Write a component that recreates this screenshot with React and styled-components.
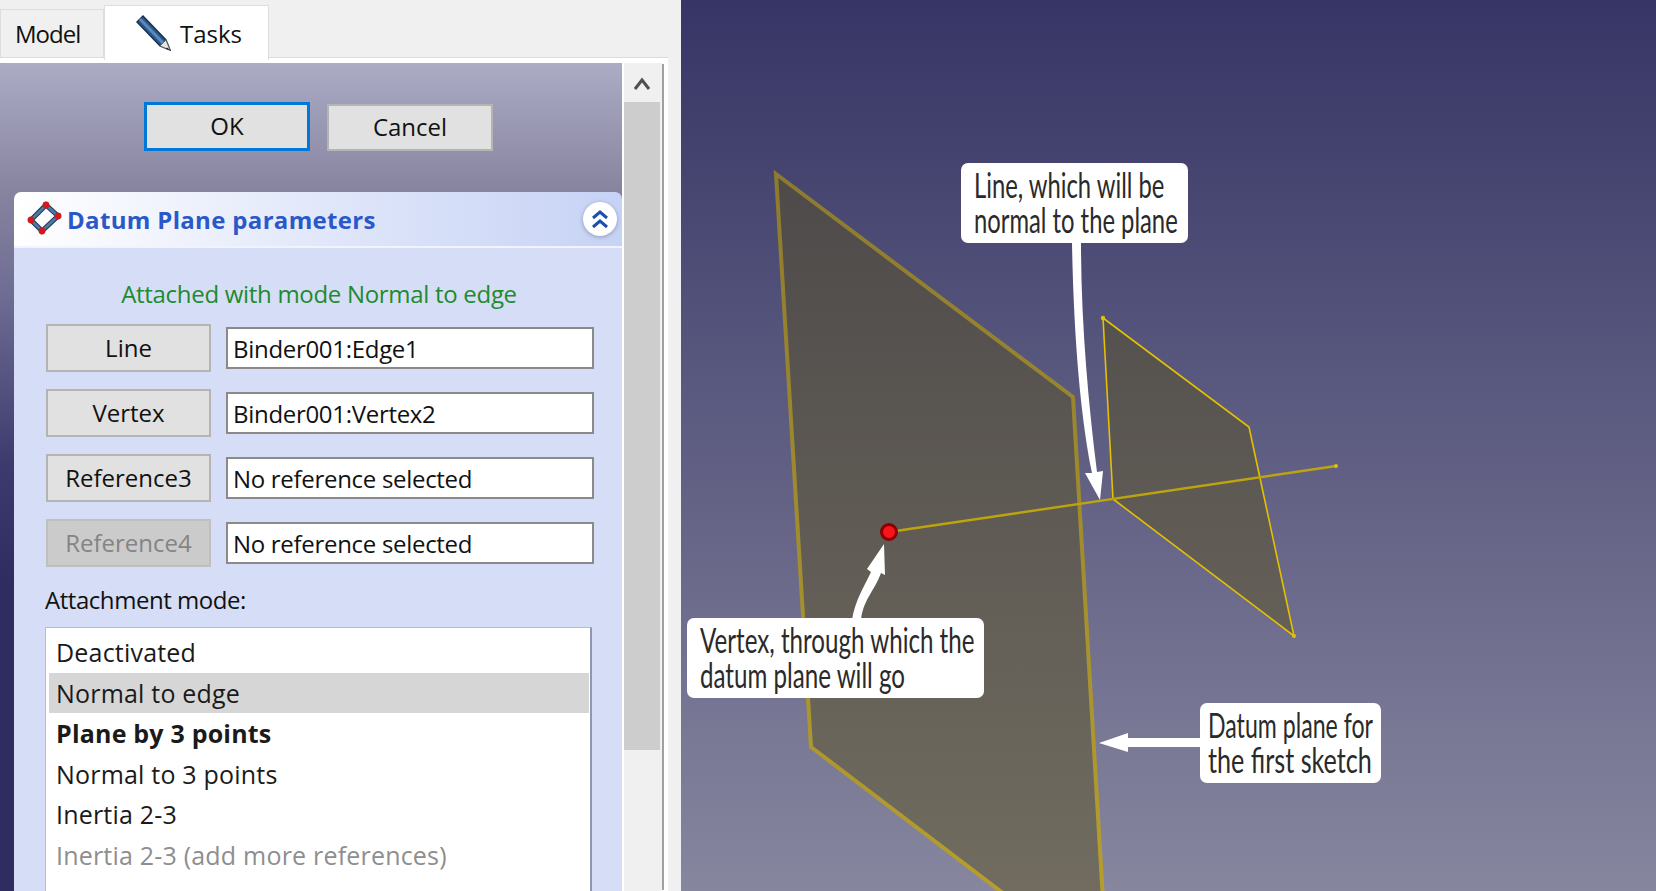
import React from 'react';
import styled, { createGlobalStyle } from 'styled-components';

const GlobalStyle = createGlobalStyle`
  html, body {
    margin: 0;
    height: 100%;
    overflow: hidden;
  }
`;

const Page = styled.div`
  display: flex;
  height: 891px;
  font-family: "Open Sans", "Liberation Sans", sans-serif;
  font-size: 24px;
  color: #111;
`;

const Sidebar = styled.div`
  width: 681px;
  flex: none;
  display: flex;
  flex-direction: column;
  background: #f0f0f0;
  overflow: hidden;
`;

const TabBar = styled.div`
  height: 57px;
  flex: none;
  display: flex;
  align-items: flex-end;
`;

const Tab = styled.div`
  display: flex;
  align-items: center;
  gap: 9px;
  box-sizing: border-box;
  width: ${p => (p.$active ? '165px' : '104px')};
  height: ${p => (p.$active ? '55px' : '48px')};
  padding-left: ${p => (p.$active ? '30px' : '14px')};
  letter-spacing: ${p => (p.$active ? '0' : '-1px')};
  background: ${p => (p.$active ? '#fff' : '#f0f0f0')};
  border: 1px solid #dedede;
  border-bottom: none;
  margin-bottom: ${p => (p.$active ? '-3px' : '0')};
  position: relative;
`;

const Frame = styled.div`
  flex: 1;
  min-height: 0;
  width: 668px;
  box-sizing: border-box;
  display: flex;
  background: #fff;
  border-top: 1px solid #dcdcdc;
  padding-top: 5px;
`;

const Panel = styled.div`
  width: 622px;
  flex: none;
  background: linear-gradient(180deg, #acacc5 0, #8784a0 127px, #6d6b92 237px, #3d3b6d 400px, #2f2d5f 520px, #2f2d5f 100%);
`;

const DialogButtons = styled.div`
  display: flex;
  gap: 17px;
  align-items: flex-end;
  padding: 39px 0 0 144px;
`;

const PushButton = styled.div`
  box-sizing: border-box;
  display: flex;
  align-items: center;
  justify-content: center;
  width: ${p => (p.$wide ? '166px' : '165px')};
  height: ${p => (p.$default ? '49px' : p.$wide ? '47px' : '48px')};
  padding-bottom: 2px;
  background: ${p => (p.$disabled ? '#cbcbcb' : '#e1e1e1')};
  color: ${p => (p.$disabled ? '#848484' : '#111')};
  border: ${p => (p.$default ? '3px solid #0078d7' : `2px solid ${p.$disabled ? '#bfbfbf' : '#b4b4b4'}`)};
`;

const Card = styled.div`
  margin: 41px 0 0 14px;
`;

const CardHeader = styled.div`
  height: 54px;
  display: flex;
  align-items: center;
  justify-content: space-between;
  padding: 0 5px 0 13px;
  background: linear-gradient(90deg, #fff 0, #d9e1f9 65%, #c7d3f5 100%);
  border-radius: 7px 7px 0 0;
  border-bottom: 2px solid #f2f4fd;
`;

const CardTitle = styled.div`
  display: flex;
  align-items: center;
  gap: 4px;
  color: #2a58c8;
  font-weight: 700;
  letter-spacing: 0.33px;
`;

const CollapseButton = styled.div`
  width: 34px;
  height: 34px;
  border-radius: 50%;
  background: #fff;
  box-shadow: 0 1px 4px rgba(90, 100, 140, 0.55);
  display: flex;
  align-items: center;
  justify-content: center;
`;

const CardBody = styled.div`
  height: 700px;
  background: #d6ddf6;
  padding: 0 30px 0 32px;
`;

const Status = styled.div`
  height: 76px;
  display: flex;
  align-items: center;
  justify-content: center;
  color: #1d8b2e;
  letter-spacing: -0.3px;
  padding: 14px 0 0 0;
  box-sizing: border-box;
`;

const RefGrid = styled.div`
  display: grid;
  grid-template-columns: 165px 368px;
  grid-auto-rows: 48px;
  column-gap: 15px;
  row-gap: 17px;
  align-items: center;
`;

const RefInput = styled.div`
  box-sizing: border-box;
  height: 42px;
  display: flex;
  align-items: center;
  padding-left: 5px;
  letter-spacing: -0.3px;
  background: #fff;
  border: 2px solid #8a8a8a;
`;

const ModeLabel = styled.div`
  margin: 10px 0 6px -1px;
  height: 44px;
  display: flex;
  align-items: center;
  letter-spacing: -0.45px;
`;

const ModeList = styled.div`
  box-sizing: border-box;
  margin-left: -1px;
  width: 547px;
  height: 400px;
  padding: 4px 1px 0 3px;
  background: #fff;
  border: 1px solid #b4bcd8;
  border-right: 2px solid #8f97b2;
`;

const ModeItem = styled.div`
  height: 40.5px;
  display: flex;
  align-items: center;
  padding-left: 7px;
  font-size: 25px;
  letter-spacing: 0.2px;
  background: ${p => (p.$selected ? '#d6d6d6' : 'transparent')};
  color: ${p => (p.$disabled ? '#8e8e8e' : '#1a1a1a')};
  font-weight: ${p => (p.$bold ? 700 : 400)};
`;

const ScrollBar = styled.div`
  width: 36px;
  margin-left: 2px;
  flex: none;
  display: flex;
  flex-direction: column;
  background: #f0f0f0;
  border-right: 2px solid #f0f0f0;
  box-shadow: 3px 0 0 -1px #a0a0a0;
`;

const ScrollArrow = styled.div`
  height: 39px;
  padding-top: 2px;
  box-sizing: border-box;
  display: flex;
  align-items: center;
  justify-content: center;
`;

const ScrollThumb = styled.div`
  height: 648px;
  background: #cdcdcd;
`;

const Viewport = styled.div`
  flex: 1;
  position: relative;
  overflow: hidden;
  background: linear-gradient(180deg, #363565 0, #87869f 100%);
`;

const Scene = styled.svg`
  position: absolute;
  inset: 0;
  width: 100%;
  height: 100%;
`;

const Callout = styled.div`
  position: absolute;
  left: ${p => p.$x}px;
  top: ${p => p.$y}px;
  width: ${p => p.$w}px;
  height: 80px;
  box-sizing: border-box;
  padding: 4px 0 0 ${p => p.$pad}px;
  background: #fff;
  border-radius: 7px;
  color: #2a2a2a;
  font-family: "Lato", sans-serif;
  font-size: 34px;
  line-height: 35px;
  white-space: nowrap;
`;

// no condensed family is installed, so the lines are squeezed to the label's narrow look
const CalloutLine = styled.div`
  transform: scaleX(${p => p.$squeeze});
  transform-origin: left top;
`;

const PencilIcon = () => (
  <svg width="36" height="36" viewBox="0 0 36 36">
    <path d="M2 7 L8 1 L31 25 L35 35 L25 31 Z" fill="#2b5688" stroke="#16304f" strokeWidth="1.4" />
    <path d="M5 4 L28.5 28.5" stroke="#5d8abd" strokeWidth="3" />
    <path d="M25 31 L31 25 L35 35 Z" fill="#e8e6dc" stroke="#555" strokeWidth="0.8" />
    <path d="M32 32.5 L35 35 L31 34 Z" fill="#222" />
  </svg>
);

const DatumIcon = () => (
  <svg width="36" height="36" viewBox="0 0 36 36">
    <path d="M19 4 L31 15 L15 30 L4 19 Z" fill="none" stroke="#2a3f57" strokeWidth="5" />
    <path d="M19 4 L31 15 L15 30 L4 19 Z" fill="none" stroke="#4a7cab" strokeWidth="2.6" />
    <circle cx="19" cy="4" r="3.4" fill="#d01a1f" />
    <circle cx="31" cy="15" r="3.4" fill="#d01a1f" />
    <circle cx="15" cy="30" r="3.4" fill="#d01a1f" />
    <circle cx="4" cy="19" r="3.4" fill="#d01a1f" />
  </svg>
);

const CollapseIcon = () => (
  <svg width="20" height="22" viewBox="0 0 20 22" fill="none" stroke="#1d4fae" strokeWidth="3">
    <path d="M3 10 L10 4 L17 10" />
    <path d="M3 19 L10 13 L17 19" />
  </svg>
);

const ChevronUp = () => (
  <svg width="18" height="14" viewBox="0 0 18 14" fill="none" stroke="#505050" strokeWidth="3">
    <path d="M2 12 L9 3 L16 12" />
  </svg>
);

// scene coordinates are page coordinates, shifted by the viewport's left edge
const DatumScene = () => (
  <Scene viewBox="681 0 975 891">
    <defs>
      <linearGradient id="planeFill" gradientUnits="userSpaceOnUse" x1="0" y1="174" x2="0" y2="891">
        <stop offset="0" stopColor="#4e4a4a" />
        <stop offset="1" stopColor="#716c5f" />
      </linearGradient>
      <linearGradient id="planeEdge" gradientUnits="userSpaceOnUse" x1="0" y1="174" x2="0" y2="891">
        <stop offset="0" stopColor="#8d7a2e" />
        <stop offset="1" stopColor="#b59e2e" />
      </linearGradient>
    </defs>
    <path d="M776 174 L1073 397 L1103 900 L1012 900 L811 747 Z" fill="url(#planeFill)" stroke="url(#planeEdge)" strokeWidth="4" />
    <path d="M1103 318 L1249 427 L1294 636 L1113 499 Z" fill="url(#planeFill)" stroke="#e3c000" strokeWidth="1.6" />
    <path d="M889 532 L1336 466" stroke="#bda40f" strokeWidth="2.4" />
    <circle cx="1103" cy="318" r="2.2" fill="#e3c000" />
    <circle cx="1294" cy="636" r="2" fill="#e3c000" />
    <circle cx="1336" cy="466" r="2" fill="#e3c000" />
    <circle cx="889" cy="532" r="7.5" fill="#f9141c" stroke="#8a0000" strokeWidth="3" />
    <path d="M1072 243 C1073 300 1077 400 1092 473 L1085 473 L1100 500 L1103 471 L1097 472 C1088 400 1081 320 1081 243 Z" fill="#fff" />
    <path d="M852 620 C855 600 865 585 871 572 L867 569 L884 544 L885 575 L881 573 C875 590 863 600 861 620 Z" fill="#fff" />
    <path d="M1099 743 L1128 733 L1128 738 L1202 738 L1202 747 L1128 747 L1128 752 Z" fill="#fff" />
  </Scene>
);

const refs = [
  { label: 'Line', value: 'Binder001:Edge1' },
  { label: 'Vertex', value: 'Binder001:Vertex2' },
  { label: 'Reference3', value: 'No reference selected' },
  { label: 'Reference4', value: 'No reference selected', disabled: true },
];

const modes = [
  { label: 'Deactivated' },
  { label: 'Normal to edge', selected: true },
  { label: 'Plane by 3 points', bold: true },
  { label: 'Normal to 3 points' },
  { label: 'Inertia 2-3' },
  { label: 'Inertia 2-3 (add more references)', disabled: true },
];

const App = () => (
  <Page>
    <GlobalStyle />
    <Sidebar>
      <TabBar>
        <Tab>Model</Tab>
        <Tab $active><PencilIcon />Tasks</Tab>
      </TabBar>
      <Frame>
        <Panel>
          <DialogButtons>
            <PushButton $wide $default>OK</PushButton>
            <PushButton $wide>Cancel</PushButton>
          </DialogButtons>
          <Card>
            <CardHeader>
              <CardTitle><DatumIcon />Datum Plane parameters</CardTitle>
              <CollapseButton><CollapseIcon /></CollapseButton>
            </CardHeader>
            <CardBody>
              <Status>Attached with mode Normal to edge</Status>
              <RefGrid>
                {refs.map(ref => (
                  <React.Fragment key={ref.label}>
                    <PushButton $disabled={ref.disabled}>{ref.label}</PushButton>
                    <RefInput>{ref.value}</RefInput>
                  </React.Fragment>
                ))}
              </RefGrid>
              <ModeLabel>Attachment mode:</ModeLabel>
              <ModeList>
                {modes.map(mode => (
                  <ModeItem key={mode.label} $selected={mode.selected} $bold={mode.bold} $disabled={mode.disabled}>
                    {mode.label}
                  </ModeItem>
                ))}
              </ModeList>
            </CardBody>
          </Card>
        </Panel>
        <ScrollBar>
          <ScrollArrow><ChevronUp /></ScrollArrow>
          <ScrollThumb />
        </ScrollBar>
      </Frame>
    </Sidebar>
    <Viewport>
      <DatumScene />
      <Callout $x={280} $y={163} $w={227} $pad={13}>
        <CalloutLine $squeeze={0.7}>Line, which will be</CalloutLine>
        <CalloutLine $squeeze={0.7}>normal to the plane</CalloutLine>
      </Callout>
      <Callout $x={6} $y={618} $w={297} $pad={13}>
        <CalloutLine $squeeze={0.71}>Vertex, through which the</CalloutLine>
        <CalloutLine $squeeze={0.71}>datum plane will go</CalloutLine>
      </Callout>
      <Callout $x={519} $y={703} $w={181} $pad={8}>
        <CalloutLine $squeeze={0.68}>Datum plane for</CalloutLine>
        <CalloutLine $squeeze={0.74}>the first sketch</CalloutLine>
      </Callout>
    </Viewport>
  </Page>
);

export default App;
